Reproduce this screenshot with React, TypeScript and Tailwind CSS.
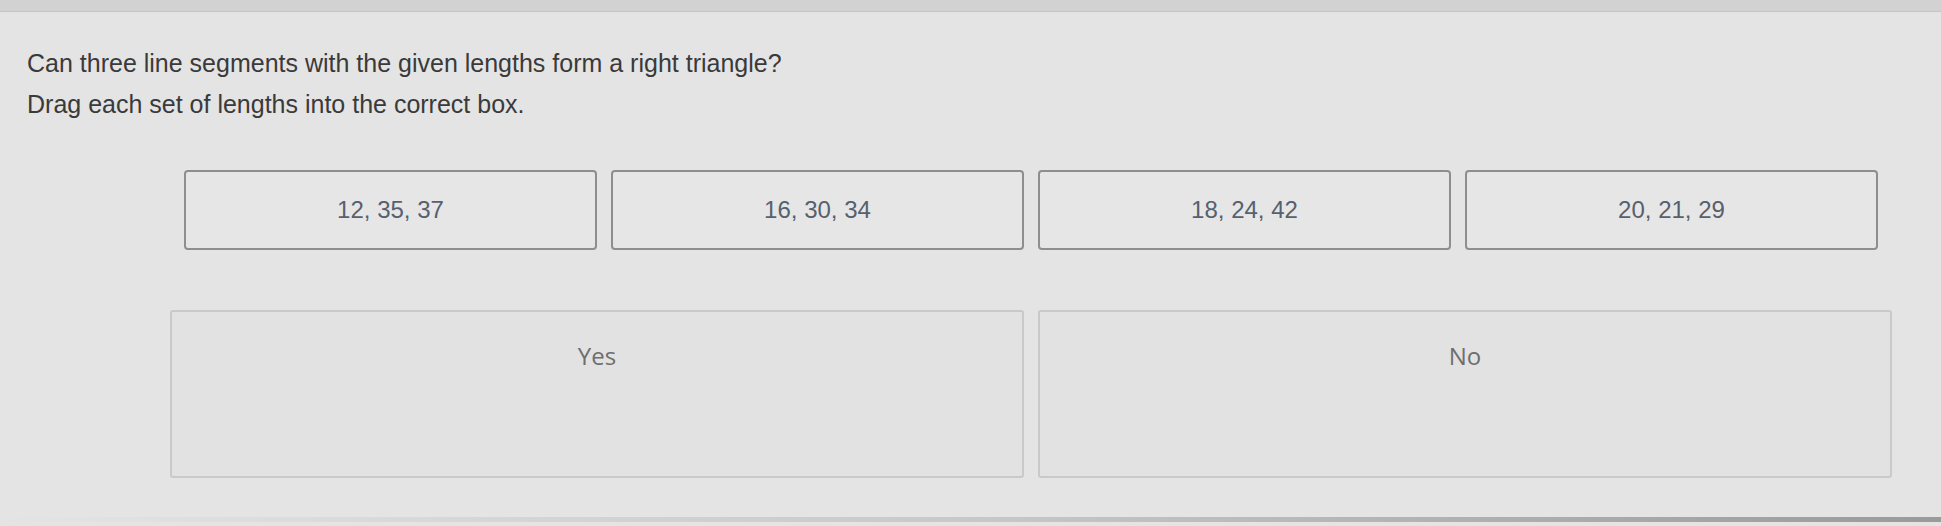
export default function App() {
  const tiles = ["12, 35, 37", "16, 30, 34", "18, 24, 42", "20, 21, 29"];
  return (
    <div className="w-[1941px] h-[526px] overflow-hidden bg-[#e4e4e4] flex flex-col" style={{ fontFamily: '"Liberation Sans", Arial, sans-serif' }}>
      <div className="h-[12px] bg-[#d2d2d2] border-b border-[#c4c4c4] shrink-0" />
      <div className="pl-[27px] pt-[31px] text-[#3a3a3a] text-[25px] leading-[41px]">
        <p>Can three line segments with the given lengths form a right triangle?</p>
        <p>Drag each set of lengths into the correct box.</p>
      </div>
      <div className="ml-[170px] w-[1722px] mt-[45px] flex flex-col gap-[60px]">
        <div className="grid grid-cols-4 gap-[14px] px-[14px]">
          {tiles.map((t) => (
            <div
              key={t}
              className="h-[80px] rounded-[4px] border-2 border-[#8e8e8e] bg-[#e6e6e6] flex items-center justify-center text-[24px] text-[#56606f]"
            >
              {t}
            </div>
          ))}
        </div>
        <div className="grid grid-cols-2 gap-[14px]">
          {["Yes", "No"].map((t) => (
            <div
              key={t}
              className="h-[168px] rounded-[3px] border-2 border-[#c9c9c9] bg-[#e2e2e2] flex justify-center pt-[26px] text-[24px] text-[#6e6e6e]"
              style={{ fontFamily: '"Open Sans", "Noto Sans", sans-serif' }}
            >
              {t}
            </div>
          ))}
        </div>
      </div>
      <div className="flex-1" />
      <div className="h-[5px] mb-[4px] shrink-0 bg-gradient-to-r from-transparent via-[#c8c8c8] to-[#9a9a9a]" />
    </div>
  );
}
